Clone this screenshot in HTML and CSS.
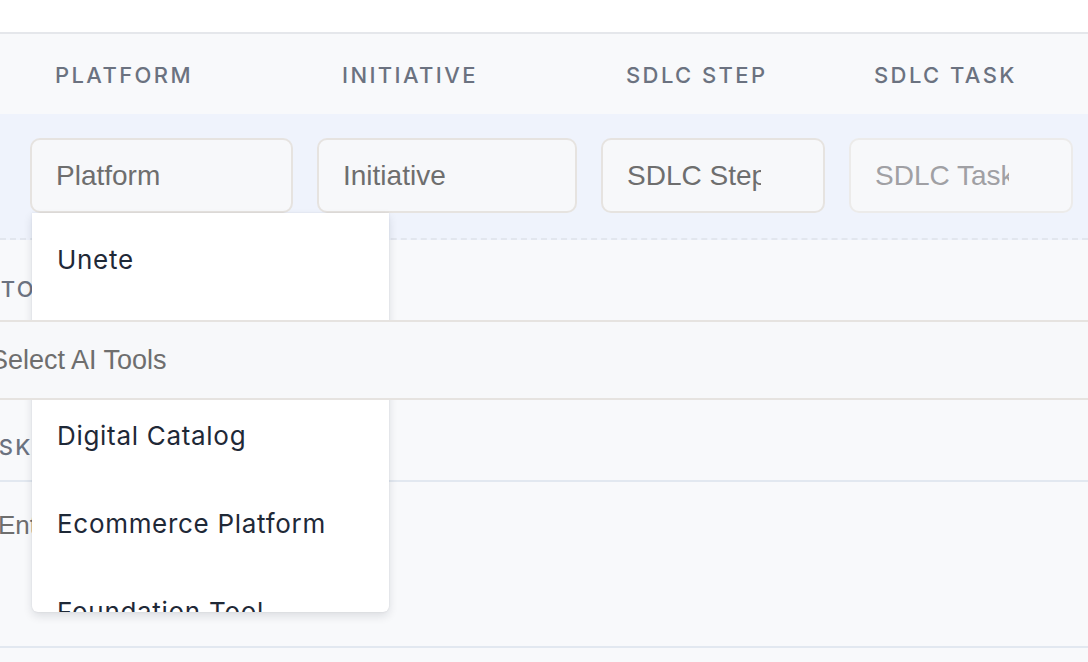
FILE: index.html
```html
<!DOCTYPE html>
<html lang="en">
<head>
<meta charset="utf-8">
<title>SDLC filters</title>
<link rel="stylesheet" href="styles.css">
</head>
<body>
<div class="topbar"></div>
<div class="table">
  <div class="row head">
    <div class="hcell">Platform</div>
    <div class="hcell">Initiative</div>
    <div class="hcell">SDLC Step</div>
    <div class="hcell">SDLC Task</div>
  </div>
  <div class="row filters">
    <div class="fcell">
      <div class="field">
        <div class="input"><span class="val">Platform</span></div>
        <ul class="dropdown">
          <li>Unete</li>
          <li>Consumer App</li>
          <li>Digital Catalog</li>
          <li>Ecommerce Platform</li>
          <li>Foundation Tool</li>
        </ul>
      </div>
    </div>
    <div class="fcell"><div class="input"><span class="val">Initiative</span></div></div>
    <div class="fcell"><div class="input"><span class="val">SDLC Step</span></div></div>
    <div class="fcell"><div class="input disabled"><span class="val">SDLC Task</span></div></div>
  </div>
</div>
<div class="form">
  <div class="label">AI Tools</div>
  <div class="select">Select AI Tools</div>
  <div class="label label-task">Task</div>
  <div class="textarea">Enter task description</div>
</div>
</body>
</html>
```
FILE: styles.css
```css
* { box-sizing: border-box; }
html, body { margin: 0; padding: 0; }
body {
  width: 1088px;
  height: 662px;
  overflow: hidden;
  background: #f8f9fb;
  font-family: "Liberation Sans", Arial, sans-serif;
}
.topbar {
  height: 34px;
  background: #ffffff;
  border-bottom: 2px solid #e5e7eb;
}
.row {
  display: grid;
  grid-template-columns: 287px 284px 248px 248px;
  padding-left: 18px;
}
.head {
  height: 80px;
  padding-top: 1px;
  background: #f8f9fb;
  align-items: center;
}
.hcell {
  padding-left: 37px;
  font-family: Inter, "Noto Sans", sans-serif;
  font-size: 22px;
  font-weight: 500;
  letter-spacing: 2.4px;
  text-transform: uppercase;
  color: #6b7280;
  white-space: nowrap;
}
.filters {
  background: #eff3fc;
  padding-top: 24px;
  padding-bottom: 25px;
  border-bottom: 2px dashed #e2e6ee;
}
.fcell { padding: 0 12px; }
.field { position: relative; }
.input {
  height: 75px;
  border: 2px solid #e6e3e0;
  border-radius: 10px;
  background: #f7f8fa;
  padding: 0 62px 0 24px;
  display: flex;
  align-items: center;
  font-size: 28px;
  color: #6e6e6e;
}
.val {
  flex: 1;
  min-width: 0;
  overflow: hidden;
  white-space: nowrap;
}
.input.disabled {
  color: #a0a0a4;
  border-color: #ecebea;
}
.dropdown {
  position: absolute;
  z-index: 2;
  top: 100%;
  left: 2px;
  width: 357px;
  height: 399px;
  margin: 0;
  padding: 2px 0 0;
  list-style: none;
  background: #ffffff;
  border-radius: 0 0 6px 6px;
  box-shadow: 0 4px 10px rgba(15, 23, 42, 0.12), 0 0 2px rgba(15, 23, 42, 0.1);
  overflow: hidden;
}
.dropdown li {
  height: 88px;
  display: flex;
  align-items: center;
  padding-left: 25px;
  font-family: Inter, "Noto Sans", sans-serif;
  font-size: 26px;
  letter-spacing: 0.7px;
  color: #1f2937;
  white-space: nowrap;
}
.form {
  margin-left: -30px;
  width: 1148px;
}
.label {
  height: 80px;
  padding-top: 36px;
  text-indent: -4px;
  font-family: Inter, "Noto Sans", sans-serif;
  font-size: 22px;
  line-height: 26px;
  font-weight: 500;
  letter-spacing: 2.4px;
  text-transform: uppercase;
  color: #6b7280;
}
.label-task { padding-top: 34px; }
.select {
  position: relative;
  z-index: 3;
  height: 80px;
  border-top: 2px solid #e6e3e0;
  border-bottom: 2px solid #e6e3e0;
  background: #f7f8fa;
  display: flex;
  align-items: center;
  padding-left: 20px;
  font-size: 27px;
  color: #6e6e6e;
}
.textarea {
  height: 168px;
  border-top: 2px solid #e2e8f0;
  border-bottom: 2px solid #e2e8f0;
  padding: 28px 0 0 28px;
  font-size: 26px;
  line-height: 30px;
  color: #6e6e6e;
}
```
